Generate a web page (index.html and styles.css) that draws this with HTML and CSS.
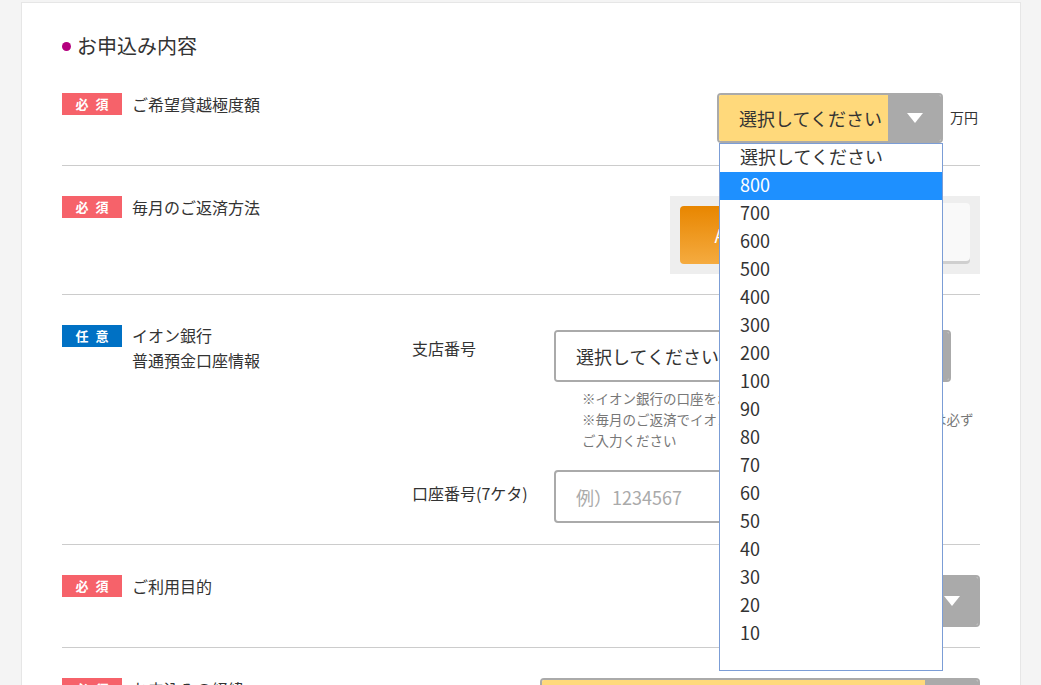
FILE: index.html
```html
<!DOCTYPE html>
<html lang="ja">
<head>
<meta charset="utf-8">
<title>お申込み内容</title>
<link rel="stylesheet" href="styles.css">
</head>
<body>
<div class="page">
  <div class="card">
    <h2 class="title"><span class="dot"></span>お申込み内容</h2>

    <div class="row row-limit">
      <div class="head"><span class="badge req">必 須</span><span class="label">ご希望貸越極度額</span></div>
      <div class="field">
        <div class="select-wrap">
          <div class="select select-yellow select-limit">
            <span class="select-text">選択してください</span>
            <span class="select-arrow"><span class="tri"></span></span>
          </div>
          <ul class="dropdown">
            <li>選択してください</li>
            <li class="active">800</li>
            <li>700</li>
            <li>600</li>
            <li>500</li>
            <li>400</li>
            <li>300</li>
            <li>200</li>
            <li>100</li>
            <li>90</li>
            <li>80</li>
            <li>70</li>
            <li>60</li>
            <li>50</li>
            <li>40</li>
            <li>30</li>
            <li>20</li>
            <li>10</li>
          </ul>
        </div>
        <span class="unit">万円</span>
      </div>
    </div>

    <div class="row">
      <div class="head"><span class="badge req">必 須</span><span class="label">毎月のご返済方法</span></div>
      <div class="field">
        <div class="pay">
          <span class="pay-btn pay-on">ATM返済</span>
          <span class="pay-btn pay-off">口座振替</span>
        </div>
      </div>
    </div>

    <div class="row row-bank">
      <div class="head"><span class="badge opt">任 意</span><span class="label label-multi">イオン銀行<br>普通預金口座情報</span></div>
      <div class="field field-bank">
        <div class="sub">
          <span class="sub-label">支店番号</span>
          <div class="sub-body">
            <div class="select select-white select-branch">
              <span class="select-text">選択してください</span>
              <span class="select-arrow"><span class="tri"></span></span>
            </div>
            <p class="notes">※イオン銀行の口座をお持ちの方はご入力ください<br>※毎月のご返済でイオン銀行の口座振替をご希望される方は必ず<br>ご入力ください</p>
          </div>
        </div>
        <div class="sub sub-account">
          <span class="sub-label">口座番号(7ケタ)</span>
          <div class="sub-body">
            <input class="text-input" type="text" placeholder="例）1234567">
          </div>
        </div>
      </div>
    </div>

    <div class="row">
      <div class="head"><span class="badge req">必 須</span><span class="label">ご利用目的</span></div>
      <div class="field">
        <div class="select select-yellow select-purpose">
          <span class="select-text">選択してください</span>
          <span class="select-arrow"><span class="tri"></span></span>
        </div>
      </div>
    </div>

    <div class="row">
      <div class="head"><span class="badge req">必 須</span><span class="label">お申込みの経緯</span></div>
      <div class="field">
        <div class="select select-yellow select-wide">
          <span class="select-text">選択してください</span>
          <span class="select-arrow"><span class="tri"></span></span>
        </div>
      </div>
    </div>
  </div>
</div>
</body>
</html>
```

FILE: styles.css
```css
html, body {
  margin: 0;
  height: 100%;
  overflow: hidden;
}
body {
  background: #f4f4f4;
  font-family: "Noto Sans CJK JP", "Noto Sans", sans-serif;
  color: #333;
}
.page {
  padding: 2px 20px 0 21px;
}
.card {
  background: #fff;
  border: 1px solid #e6e6e6;
  border-bottom: none;
  padding: 30px 40px 0;
  min-height: 760px;
}
.title {
  margin: 0 0 4px;
  font-size: 20px;
  font-weight: normal;
  line-height: 26px;
  display: flex;
  align-items: center;
  gap: 6px;
  color: #333;
}
.dot {
  width: 9px;
  height: 9px;
  border-radius: 50%;
  background: #b4007e;
  margin-top: 1px;
}
.row {
  display: flex;
  align-items: flex-start;
  padding: 30px 0 20px;
  border-bottom: 1px solid #cccccc;
}
.row-limit {
  padding-bottom: 22px;
  position: relative;
  z-index: 5;
}
.row-bank {
  padding-bottom: 21px;
}
.head {
  display: flex;
  align-items: flex-start;
  gap: 10px;
}
.badge {
  width: 60px;
  height: 22px;
  line-height: 22px;
  font-size: 13px;
  font-weight: bold;
  letter-spacing: 2px;
  text-indent: 2px;
  text-align: center;
  color: #fff;
  flex: none;
}
.req { background: #f6626a; }
.opt { background: #0071c4; }
.label {
  font-size: 16px;
  line-height: 22px;
}
.label-multi {
  line-height: 25px;
  margin-top: -2px;
}
.field {
  margin-left: auto;
  display: flex;
  align-items: flex-start;
}
.select-wrap {
  position: relative;
}
.select {
  display: flex;
  box-sizing: border-box;
  height: 52px;
  border: 2px solid #aaaaaa;
  border-radius: 4px;
  overflow: hidden;
}
.select-text {
  flex: 1;
  padding-left: 20px;
  font-size: 18px;
  line-height: 48px;
  white-space: nowrap;
  overflow: hidden;
}
.select-yellow .select-text { background: #ffd97b; }
.select-white .select-text { background: #fff; }
.select-arrow {
  width: 53px;
  background: #aaaaaa;
  display: flex;
  align-items: center;
  justify-content: center;
  flex: none;
}
.tri {
  width: 0;
  height: 0;
  border-left: 8px solid transparent;
  border-right: 8px solid transparent;
  border-top: 10px solid #fff;
}
.select-limit {
  width: 226px;
  height: 50px;
}
.select-limit .select-text { line-height: 46px; }
.select-branch { width: 397px; margin-top: 5px; }
.select-purpose { width: 226px; }
.select-wide { width: 440px; }
.unit {
  font-size: 14px;
  line-height: 48px;
  margin-left: 7px;
  margin-right: 2px;
}
.dropdown {
  position: absolute;
  top: 50px;
  left: 2px;
  width: 224px;
  height: 528px;
  box-sizing: border-box;
  margin: 0;
  padding: 0;
  list-style: none;
  background: #fff;
  border: 1px solid #7b9dd6;
  z-index: 20;
}
.dropdown li {
  height: 28px;
  line-height: 25px;
  padding-left: 20px;
  font-size: 18px;
  color: #333;
  white-space: nowrap;
}
.dropdown li.active {
  background: #1e90ff;
  color: #fff;
}
.pay {
  width: 310px;
  height: 78px;
  box-sizing: border-box;
  padding: 10px;
  background: #eeeeee;
  display: flex;
  gap: 10px;
}
.pay-btn {
  width: 140px;
  height: 58px;
  border-radius: 4px;
  display: flex;
  align-items: center;
  justify-content: center;
  font-size: 18px;
}
.pay-on {
  background: linear-gradient(#e88600, #f5ab40);
  color: #fff;
}
.pay-off {
  background: #f9f9f9;
  color: #333;
  height: 58px;
  margin-top: -3px;
  box-shadow: 0 3px 0 #cfcfcf;
}
.field-bank {
  width: 568px;
  flex-direction: column;
}
.sub {
  display: flex;
  width: 100%;
}
.sub-label {
  width: 142px;
  flex: none;
  font-size: 16px;
  line-height: 22px;
  padding-top: 12px;
  white-space: nowrap;
}
.sub-body {
  flex: 1;
}
.notes {
  margin: 6px 0 0 28px;
  font-size: 13.5px;
  line-height: 21px;
  color: #777;
  white-space: nowrap;
}
.sub-account {
  margin-top: 19px;
}
.text-input {
  display: block;
  box-sizing: border-box;
  width: 300px;
  height: 53px;
  border: 2px solid #aaaaaa;
  border-radius: 4px;
  padding: 0 0 0 20px;
  font-family: "Noto Sans CJK JP", "Noto Sans", sans-serif;
  font-size: 18px;
  color: #333;
  outline: none;
}
.text-input::placeholder {
  color: #aaaaaa;
}
```
